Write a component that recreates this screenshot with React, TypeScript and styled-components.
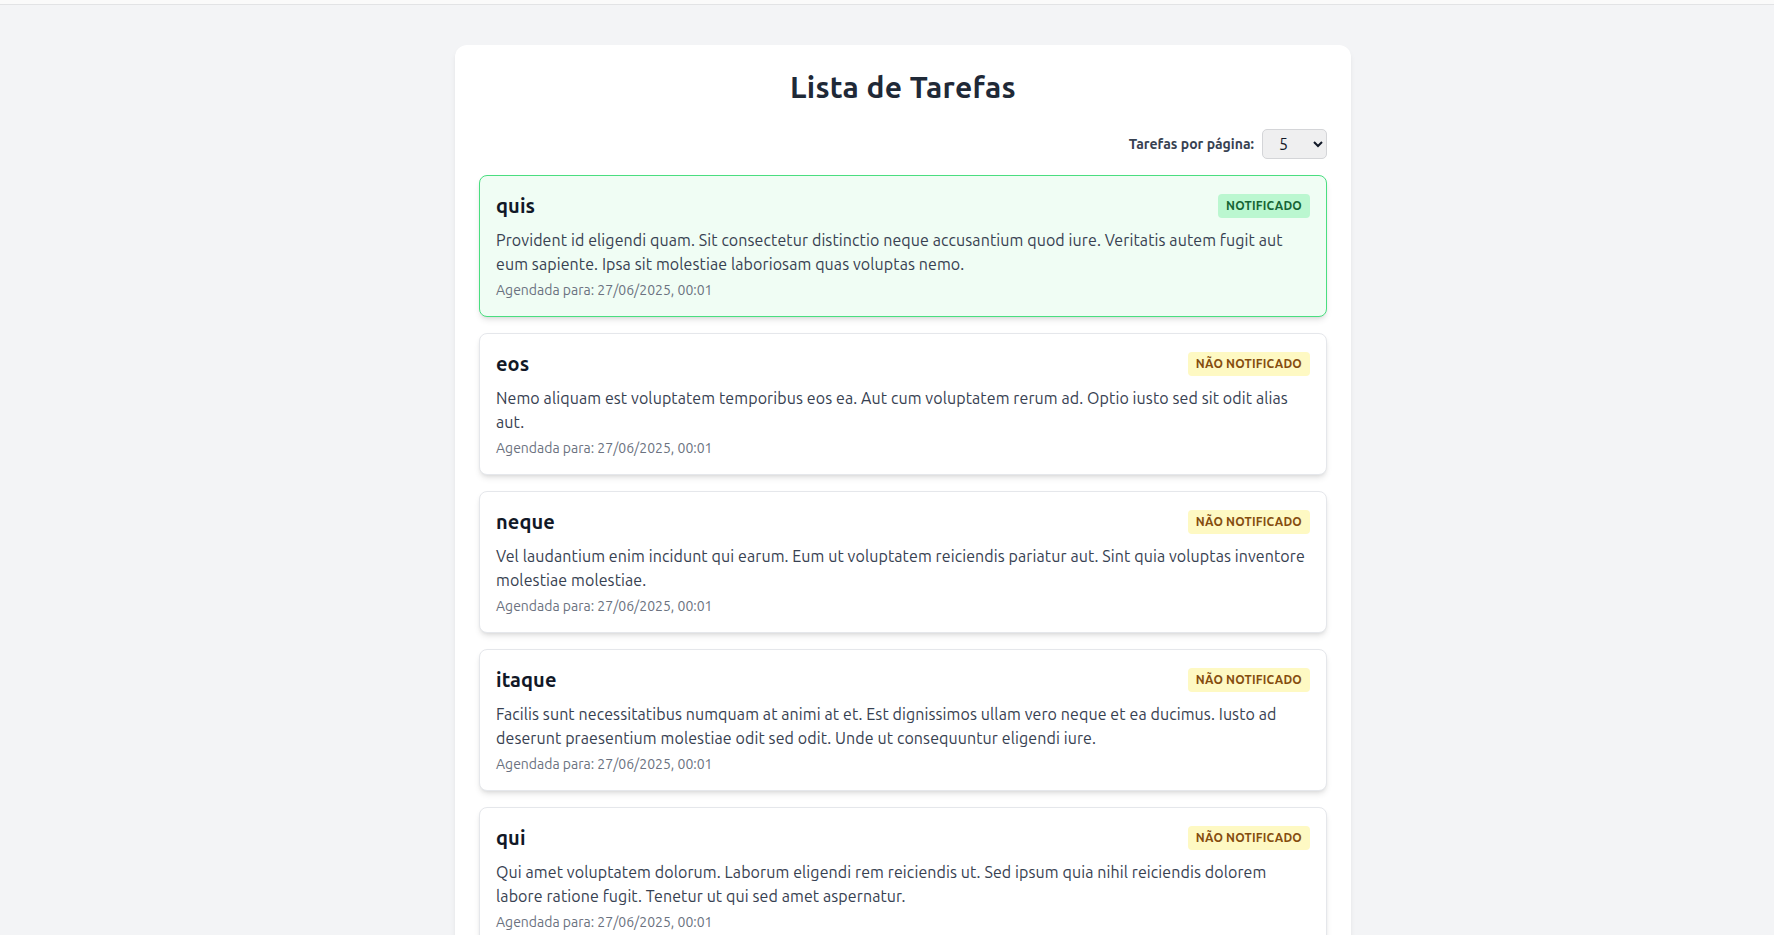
import React from "react";
import styled, { createGlobalStyle } from "styled-components";

const GlobalStyle = createGlobalStyle`
  * { box-sizing: border-box; }
  html, body { margin: 0; padding: 0; }
  body {
    background: #f3f4f6;
    font-family: "Ubuntu", Roboto, "Liberation Sans", sans-serif;
    color: #1f2937;
  }
`;

const TopBar = styled.div`
  height: 5px;
  background: #fafafa;
  border-bottom: 1px solid #e2e3e5;
`;

const Main = styled.main`
  padding: 40px 0 40px 32px;
`;

const Panel = styled.section`
  max-width: 896px;
  margin: 0 auto;
  background: #ffffff;
  border-radius: 12px;
  box-shadow: 0 4px 6px -1px rgba(0, 0, 0, 0.08), 0 2px 4px -2px rgba(0, 0, 0, 0.06);
  padding: 24px;
`;

const Heading = styled.h1`
  margin: 0 0 24px;
  font-size: 30px;
  line-height: 36px;
  font-weight: 700;
  letter-spacing: 0.28px;
  text-align: center;
  color: #1f2937;
`;

const Toolbar = styled.div`
  display: flex;
  justify-content: flex-end;
  align-items: center;
  gap: 8px;
  margin-bottom: 16px;
`;

const Label = styled.label`
  font-size: 14px;
  line-height: 20px;
  font-weight: 600;
  color: #374151;
`;

const Select = styled.select`
  width: 65px;
  height: 30px;
  padding: 0 6px 0 12px;
  font-family: inherit;
  font-size: 16px;
  color: #111827;
  background-color: #efeff0;
  border: 1px solid #d4d5d8;
  border-radius: 5px;
`;

const List = styled.div`
  display: flex;
  flex-direction: column;
  gap: 16px;
`;

const Card = styled.article<{ $notified: boolean }>`
  padding: 16px;
  border-radius: 8px;
  border: 1px solid ${(p) => (p.$notified ? "#4ade80" : "#e5e7eb")};
  background: ${(p) => (p.$notified ? "#f0fdf4" : "#ffffff")};
  box-shadow: 0 4px 6px -1px rgba(0, 0, 0, 0.1), 0 2px 4px -2px rgba(0, 0, 0, 0.1);
`;

const CardHeader = styled.div`
  display: flex;
  justify-content: space-between;
  align-items: center;
  margin-bottom: 8px;
`;

const CardTitle = styled.h2`
  margin: 0;
  font-size: 20px;
  line-height: 28px;
  font-weight: 700;
  letter-spacing: 0.1px;
  color: #111827;
`;

const Badge = styled.span<{ $notified: boolean }>`
  padding: 4px 8px;
  border-radius: 4px;
  font-size: 12px;
  line-height: 16px;
  font-weight: 700;
  letter-spacing: 0.2px;
  text-transform: uppercase;
  background: ${(p) => (p.$notified ? "#bbf7d0" : "#fef9c3")};
  color: ${(p) => (p.$notified ? "#166534" : "#854d0e")};
`;

const Description = styled.p`
  margin: 0 0 4px;
  font-size: 16px;
  line-height: 24px;
  letter-spacing: 0.1px;
  color: #374151;
`;

const DateText = styled.p`
  margin: 0;
  font-size: 14px;
  line-height: 20px;
  color: #6b7280;
`;

type Task = { title: string; description: string; notified: boolean };

const tasks: Task[] = [
  {
    title: "quis",
    description:
      "Provident id eligendi quam. Sit consectetur distinctio neque accusantium quod iure. Veritatis autem fugit aut eum sapiente. Ipsa sit molestiae laboriosam quas voluptas nemo.",
    notified: true,
  },
  {
    title: "eos",
    description:
      "Nemo aliquam est voluptatem temporibus eos ea. Aut cum voluptatem rerum ad. Optio iusto sed sit odit alias aut.",
    notified: false,
  },
  {
    title: "neque",
    description:
      "Vel laudantium enim incidunt qui earum. Eum ut voluptatem reiciendis pariatur aut. Sint quia voluptas inventore molestiae molestiae.",
    notified: false,
  },
  {
    title: "itaque",
    description:
      "Facilis sunt necessitatibus numquam at animi at et. Est dignissimos ullam vero neque et ea ducimus. Iusto ad deserunt praesentium molestiae odit sed odit. Unde ut consequuntur eligendi iure.",
    notified: false,
  },
  {
    title: "qui",
    description:
      "Qui amet voluptatem dolorum. Laborum eligendi rem reiciendis ut. Sed ipsum quia nihil reiciendis dolorem labore ratione fugit. Tenetur ut qui sed amet aspernatur.",
    notified: false,
  },
];

export default function App() {
  return (
    <>
      <GlobalStyle />
      <TopBar />
      <Main>
        <Panel>
          <Heading>Lista de Tarefas</Heading>
          <Toolbar>
            <Label htmlFor="per-page">Tarefas por página:</Label>
            <Select id="per-page" defaultValue="5">
              <option value="5">5</option>
              <option value="10">10</option>
              <option value="20">20</option>
            </Select>
          </Toolbar>
          <List>
            {tasks.map((t) => (
              <Card key={t.title} $notified={t.notified}>
                <CardHeader>
                  <CardTitle>{t.title}</CardTitle>
                  <Badge $notified={t.notified}>
                    {t.notified ? "Notificado" : "Não notificado"}
                  </Badge>
                </CardHeader>
                <Description>{t.description}</Description>
                <DateText>Agendada para: 27/06/2025, 00:01</DateText>
              </Card>
            ))}
          </List>
        </Panel>
      </Main>
    </>
  );
}
